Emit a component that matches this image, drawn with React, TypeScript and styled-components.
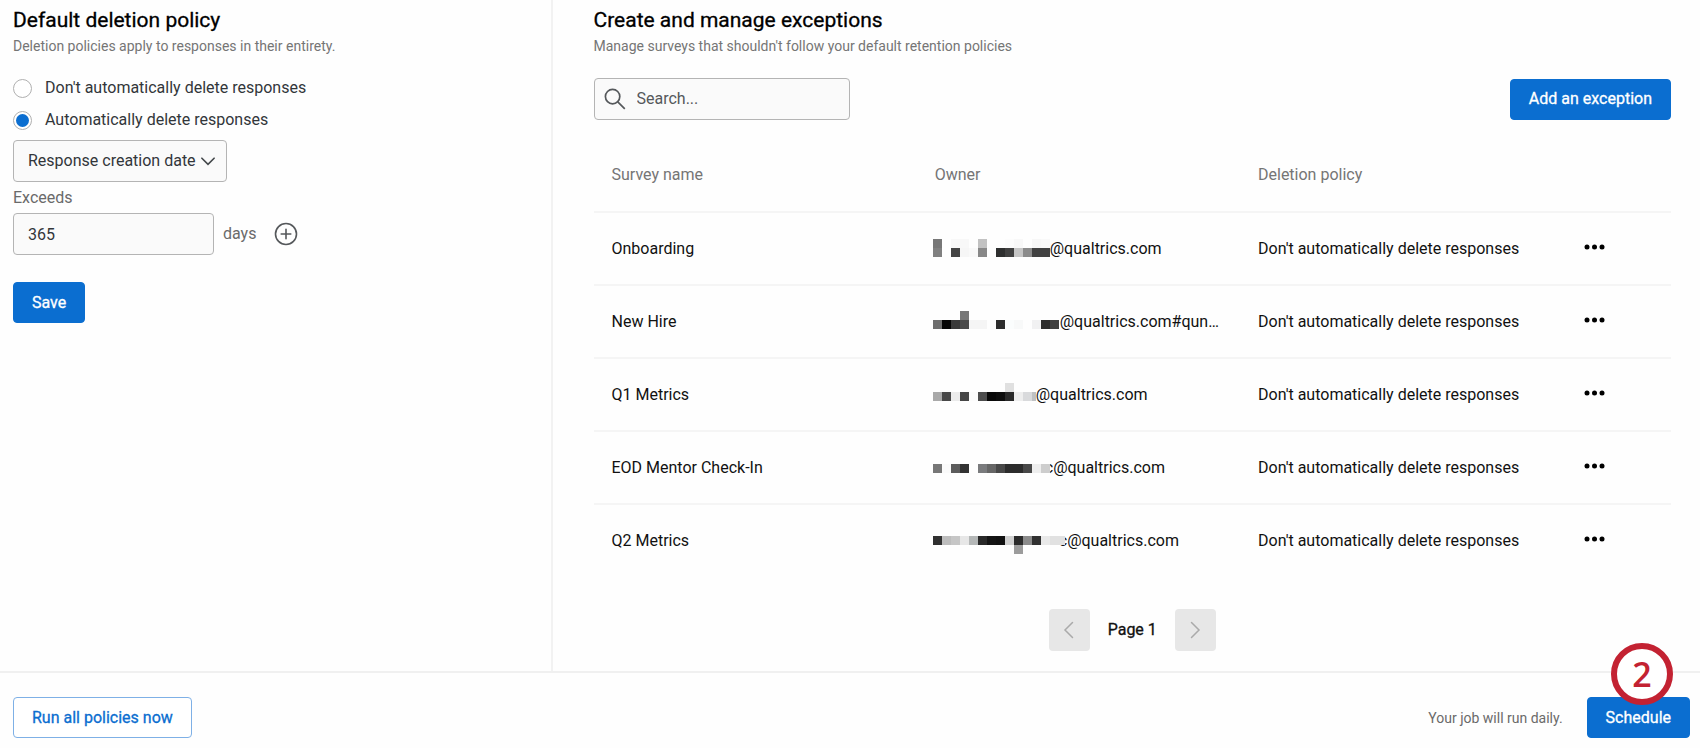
import React from "react";
import styled, { createGlobalStyle } from "styled-components";

const GlobalStyle = createGlobalStyle`
  *, *::before, *::after { box-sizing: border-box; }
  body {
    margin: 0;
    background: #fefefe;
    color: #111;
    font-family: Roboto, "Liberation Sans", sans-serif;
    font-size: 16px;
    line-height: 20px;
  }
  button, input, select { font: inherit; }
`;

const Page = styled.div`
  display: flex;
  flex-direction: column;
  min-height: 100vh;
`;

const Panels = styled.main`
  display: flex;
  flex: 1;
`;

const PolicyPanel = styled.section`
  width: 32.5%;
  padding: 8px 13px 0;
  border-right: 2px solid #f2f2f2;
`;

const ExceptionsPanel = styled.section`
  flex: 1;
  padding: 8px 29px 20px 41px;
`;

const Title = styled.h2`
  margin: 0;
  font-size: 21px;
  font-weight: 400;
  line-height: 24px;
  color: #000;
  -webkit-text-stroke: 0.3px currentColor;
`;

const Subtitle = styled.p`
  margin: 4px 0 0;
  font-size: 14px;
  line-height: 20px;
  color: #757575;
`;

const RadioGroup = styled.fieldset`
  display: flex;
  flex-direction: column;
  gap: 12px;
  margin: 22px 0 10px;
  padding: 0;
  border: 0;
`;

const RadioLabel = styled.label`
  display: flex;
  align-items: center;
  gap: 13px;
  color: #32363a;
`;

const Radio = styled.input`
  appearance: none;
  display: grid;
  place-items: center;
  width: 19px;
  height: 19px;
  margin: 0;
  border: 1px solid #b0b0b0;
  border-radius: 50%;
  background: #fff;

  &:checked::before {
    content: "";
    width: 13px;
    height: 13px;
    border-radius: 50%;
    background: #0b6ed0;
  }
`;

const SelectBox = styled.div`
  display: inline-grid;
  align-items: center;
  width: 214px;

  > * { grid-area: 1 / 1; }
  > svg { justify-self: end; margin-right: 9px; pointer-events: none; }
`;

const Select = styled.select`
  appearance: none;
  width: 100%;
  height: 42px;
  padding: 0 20px 0 14px;
  border: 1px solid #b4b4b4;
  border-radius: 4px;
  background: #fafafa;
  color: #32363a;
`;

const FieldLabel = styled.label`
  display: block;
  margin: 6px 0 5px;
  color: #6a6a6a;
`;

const FieldRow = styled.div`
  display: flex;
  align-items: center;
  margin-bottom: 27px;
`;

const NumberField = styled.input`
  width: 201px;
  height: 42px;
  padding: 0 14px;
  border: 1px solid #b4b4b4;
  border-radius: 4px;
  background: #fafafa;
  color: #32363a;
`;

const Unit = styled.span`
  margin: 0 18px 0 9px;
  color: #6a6a6a;
`;

const IconButton = styled.button`
  display: inline-flex;
  padding: 0;
  border: 0;
  background: none;
  color: inherit;
`;

const Button = styled.button<{ $outline?: boolean }>`
  height: 41px;
  padding: 0 18px;
  border: 1px solid ${(p) => (p.$outline ? "#7eb0e6" : "#0b6ed0")};
  border-radius: 4px;
  background: ${(p) => (p.$outline ? "#fff" : "#0b6ed0")};
  color: ${(p) => (p.$outline ? "#0b6ed0" : "#fff")};
  white-space: nowrap;
  -webkit-text-stroke: 0.3px currentColor;
`;

const Toolbar = styled.div`
  display: flex;
  align-items: center;
  justify-content: space-between;
  margin: 22px 0 32px;
`;

const SearchBox = styled.label`
  display: flex;
  align-items: center;
  gap: 11px;
  width: 256px;
  height: 42px;
  padding: 0 9px;
  border: 1px solid #b4b4b4;
  border-radius: 4px;
  background: #fafafa;
`;

const SearchInput = styled.input`
  flex: 1;
  min-width: 0;
  padding: 0;
  border: 0;
  background: none;
  outline: 0;

  &::placeholder { color: #55585b; opacity: 1; }
`;

const Table = styled.table`
  width: 100%;
  table-layout: fixed;
  border-collapse: collapse;
  text-align: left;

  tbody tr:last-child td { border-bottom: 0; }
`;

const HeadCell = styled.th<{ $width: string }>`
  width: ${(p) => p.$width};
  height: 60px;
  padding: 0 18px 14px;
  border-bottom: 2px solid #f5f5f5;
  font-weight: 400;
  color: #757575;
`;

const Cell = styled.td`
  height: 73px;
  padding: 0 18px;
  border-bottom: 2px solid #f5f5f5;
  color: #111;
  white-space: nowrap;
`;

const Owner = styled.span`
  display: flex;
  align-items: center;
  margin-left: -2px;
`;

const MenuCell = styled(Cell)`
  padding: 0 21px 4px;
`;

const MenuButton = styled(IconButton)`
  display: flex;
  color: #000;
`;

const Pagination = styled.nav`
  display: flex;
  justify-content: center;
  align-items: center;
  gap: 18px;
  margin-top: 32px;
  -webkit-text-stroke: 0.3px currentColor;
`;

const PageButton = styled.button`
  display: grid;
  place-items: center;
  width: 41px;
  height: 42px;
  padding: 0;
  border: 0;
  border-radius: 4px;
  background: #e7e7e7;
`;

const Footer = styled.footer`
  display: flex;
  align-items: center;
  justify-content: space-between;
  padding: 24px 10px 11px 13px;
  border-top: 2px solid #f0f0f0;
`;

const ScheduleGroup = styled.div`
  display: flex;
  align-items: center;
  gap: 24px;
  font-size: 14px;
  color: #6a6a6a;
`;

const ScheduleAnchor = styled.div`
  position: relative;
  display: flex;
  font-size: 16px;
`;

const StepBadge = styled.span`
  position: absolute;
  right: 17px;
  bottom: 33px;
  display: grid;
  place-items: center;
  width: 62px;
  height: 62px;
  border: 6px solid #c32232;
  border-radius: 50%;
  background: #fff;
  color: #c32232;
  font-family: "Open Sans", sans-serif;
  font-size: 34px;
  font-weight: 600;
  line-height: 34px;
`;

type Shade = string | null;

/* rows: lines of 9px blocks, null leaving a block empty.
   top: where the first line starts inside the 30px strip.
   overlap: how far the blocks reach over the address. */
interface MaskProps {
  rows: Shade[][];
  width: number;
  top: number;
  overlap: number;
}

const MaskSvg = styled.svg<{ $overlap: number }>`
  position: relative;
  flex: none;
  margin-right: -${(p) => p.$overlap}px;
`;

function Mask({ rows, width, top, overlap }: MaskProps) {
  return (
    <MaskSvg $overlap={overlap} width={width} height={30} viewBox={`0 0 ${width} 30`} shapeRendering="crispEdges" aria-hidden>
      {rows.map((row, y) =>
        row.map(
          (fill, x) => fill && <rect key={`${x}-${y}`} x={x * 9} y={top + y * 9} width={9} height={9} fill={fill} />
        )
      )}
    </MaskSvg>
  );
}

const n = null;
const exceptions = [
  {
    name: "Onboarding",
    owner: "@qualtrics.com",
    width: 117,
    top: 5,
    overlap: 0,
    mask: [
      ["#777", n, "#f8f8f8", "#f8f8f8", n, "#c2c2c2", n, n, "#fcfcfc", "#f8f8f8", n, "#f7f7f7", "#f9f9f9"],
      ["#808080", n, "#444", "#f6f6f6", "#f9f9f9", "#888", n, "#2e2f2f", "#414141", "#c5c5c5", "#8b8b8b", "#414141", "#414141"],
    ],
  },
  {
    name: "New Hire",
    owner: "@qualtrics.com#qun…",
    width: 127,
    top: 4,
    overlap: 0,
    mask: [
      [n, n, n, "#777"],
      ["#6e6e6e", "#050505", "#393939", "#4b4b4b", "#f5f5f5", "#f5f5f5", n, "#2d2d2d", "#fbfdfd", "#f8f9f9", n, "#f1f1f2", "#2c2c2c", "#404040"],
    ],
  },
  {
    name: "Q1 Metrics",
    owner: "@qualtrics.com",
    width: 103,
    top: 3,
    overlap: 0,
    mask: [
      [n, n, n, n, n, n, n, n, "#e0e0e0"],
      ["#a9a9a9", "#484848", "#ebebeb", "#464646", "#fbfbfb", "#4d4d4d", "#090909", "#0e0e0e", "#2a2a2a", "#eee", "#d9dadc", "#bfc1c3"],
    ],
  },
  {
    name: "EOD Mentor Check-In",
    owner: "c@qualtrics.com",
    width: 117,
    top: 2,
    overlap: 5,
    mask: [
      [],
      ["#777", "#fafafa", "#5c5c5c", "#333", n, "#7a7b7d", "#666", "#484848", "#2c2c2c", "#2c2c2c", "#484848", "#eee", "#cdcdcd"],
    ],
  },
  {
    name: "Q2 Metrics",
    owner: "c@qualtrics.com",
    width: 132,
    top: 1,
    overlap: 6,
    mask: [
      [],
      ["#303030", "#bdbdbd", "#c6c6c6", "#e7e7e7", "#b4b7b7", "#292929", "#141414", "#111", "#d0d0d0", "#2b2b2b", "#8b8b8b", "#303030", "#e9e9e9", "#e1e1e1", "#e1e1e1"],
      [n, n, n, n, n, n, n, n, n, "#9c9c9c"],
    ],
  },
];

function Chevron({ points, size, color }: { points: string; size: number; color: string }) {
  return (
    <svg width={size} height={size} viewBox="0 0 18 18" fill="none" stroke={color} strokeWidth="1.5" strokeLinecap="round" aria-hidden>
      <polyline points={points} />
    </svg>
  );
}

export default function App() {
  return (
    <Page>
      <GlobalStyle />
      <Panels>
        <PolicyPanel>
          <Title>Default deletion policy</Title>
          <Subtitle>Deletion policies apply to responses in their entirety.</Subtitle>
          <RadioGroup aria-label="Default deletion policy">
            <RadioLabel>
              <Radio type="radio" name="policy" />
              Don't automatically delete responses
            </RadioLabel>
            <RadioLabel>
              <Radio type="radio" name="policy" defaultChecked />
              Automatically delete responses
            </RadioLabel>
          </RadioGroup>
          <SelectBox>
            <Select aria-label="Date field">
              <option>Response creation date</option>
            </Select>
            <Chevron points="3.5,6.5 9,12 14.5,6.5" size={20} color="#44484b" />
          </SelectBox>
          <FieldLabel htmlFor="exceeds">Exceeds</FieldLabel>
          <FieldRow>
            <NumberField id="exceeds" type="text" inputMode="numeric" defaultValue="365" />
            <Unit>days</Unit>
            <IconButton type="button" aria-label="Add condition">
              <svg width="24" height="24" viewBox="0 0 24 24" fill="none" stroke="#55585b" strokeWidth="1.6" strokeLinecap="round">
                <circle cx="12" cy="12" r="10.5" />
                <path d="M12 7.2v9.6M7.2 12h9.6" />
              </svg>
            </IconButton>
          </FieldRow>
          <Button type="button">Save</Button>
        </PolicyPanel>

        <ExceptionsPanel>
          <Title>Create and manage exceptions</Title>
          <Subtitle>Manage surveys that shouldn't follow your default retention policies</Subtitle>
          <Toolbar>
            <SearchBox>
              <svg width="22" height="22" viewBox="0 0 22 22" fill="none" stroke="#55585b" strokeWidth="1.7" aria-hidden>
                <circle cx="8.6" cy="8.6" r="7.2" />
                <path d="M13.8 13.8l7 7" />
              </svg>
              <SearchInput type="text" placeholder="Search..." aria-label="Search" />
            </SearchBox>
            <Button type="button">Add an exception</Button>
          </Toolbar>
          <Table>
            <thead>
              <tr>
                <HeadCell scope="col" $width="30%">Survey name</HeadCell>
                <HeadCell scope="col" $width="30%">Owner</HeadCell>
                <HeadCell scope="col" $width="30%">Deletion policy</HeadCell>
                <HeadCell $width="10%" aria-label="Actions" />
              </tr>
            </thead>
            <tbody>
              {exceptions.map((item) => (
                <tr key={item.name}>
                  <Cell>{item.name}</Cell>
                  <Cell>
                    <Owner>
                      <Mask rows={item.mask} width={item.width} top={item.top} overlap={item.overlap} />
                      {item.owner}
                    </Owner>
                  </Cell>
                  <Cell>Don't automatically delete responses</Cell>
                  <MenuCell>
                    <MenuButton type="button" aria-label={`Actions for ${item.name}`}>
                      <svg width="22" height="6" viewBox="0 0 22 6" fill="currentColor">
                        <circle cx="3" cy="3" r="2.5" />
                        <circle cx="10.5" cy="3" r="2.5" />
                        <circle cx="18" cy="3" r="2.5" />
                      </svg>
                    </MenuButton>
                  </MenuCell>
                </tr>
              ))}
            </tbody>
          </Table>
          <Pagination aria-label="Pages">
            <PageButton type="button" aria-label="Previous page" disabled>
              <Chevron points="12.5,1.5 5,9 12.5,16.5" size={18} color="#aaa" />
            </PageButton>
            Page 1
            <PageButton type="button" aria-label="Next page" disabled>
              <Chevron points="5.5,1.5 13,9 5.5,16.5" size={18} color="#aaa" />
            </PageButton>
          </Pagination>
        </ExceptionsPanel>
      </Panels>
      <Footer>
        <Button type="button" $outline>Run all policies now</Button>
        <ScheduleGroup>
          Your job will run daily.
          <ScheduleAnchor>
            <Button type="button">Schedule</Button>
            <StepBadge>2</StepBadge>
          </ScheduleAnchor>
        </ScheduleGroup>
      </Footer>
    </Page>
  );
}
